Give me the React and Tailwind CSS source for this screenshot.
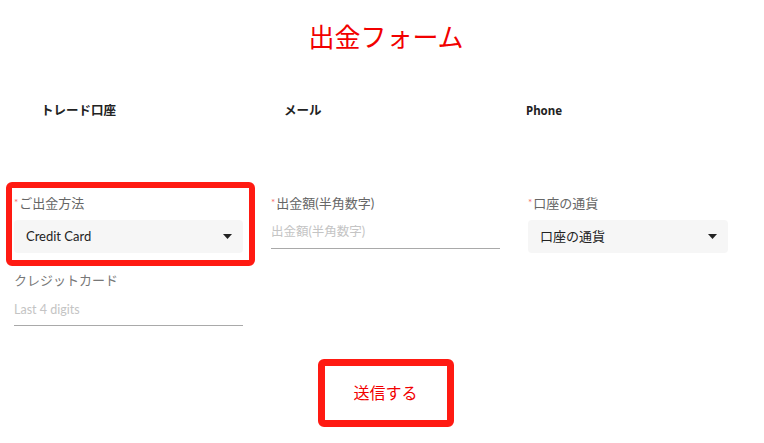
const jp = "font-['Lato','Noto_Sans_CJK_JP',sans-serif]";

function Caret() {
  return (
    <svg width="9" height="5" viewBox="0 0 9 5" className="shrink-0">
      <path d="M0 0h9L4.5 5z" fill="#222" />
    </svg>
  );
}

function Label({ children }) {
  return (
    <div className="flex items-center text-[13px] leading-[18px] text-[#666]">
      <span className="mr-[1px] mt-[-2px] text-[10px] leading-none text-[#f46a6a]">*</span>
      {children}
    </div>
  );
}

function SelectBox({ value, className = "" }) {
  return (
    <div
      className={`mt-[8px] flex h-[33px] items-center justify-between rounded-[4px] bg-[#f6f6f6] pl-[12px] pr-[11px] text-[13px] text-[#222] ${className}`}
    >
      <span>{value}</span>
      <Caret />
    </div>
  );
}

function UnderlineInput({ placeholder, className = "" }) {
  return (
    <div className={`border-b border-[#a9a9a9] ${className}`}>
      <span className="text-[12.5px] text-[#c4c4c4]">{placeholder}</span>
    </div>
  );
}

export default function App() {
  return (
    <div className={`h-[443px] w-[764px] overflow-hidden bg-white ${jp}`}>
      <h1 className="pl-[8px] pt-[18px] text-center text-[26px] leading-[36px] font-normal text-[#f20000] font-['Noto_Sans_CJK_JP',sans-serif]">
        出金フォーム
      </h1>

      <div className="mt-[48px] flex text-[12.5px] font-bold text-[#222]">
        <div className="ml-[41px] w-[243px]">トレード口座</div>
        <div className="w-[242px]">メール</div>
        <div className="font-['Noto_Sans',sans-serif] text-[11.5px]">Phone</div>
      </div>

      <div className="mt-[73px] grid grid-cols-[229px_229px_200px] gap-x-[28px] pl-[14px]">
        <div>
          <div className="relative">
            <div className="pointer-events-none absolute -left-[8px] -right-[12px] -top-[12px] -bottom-[13px] rounded-[6px] border-[6px] border-[#ff1a12]" />
            <Label>ご出金方法</Label>
            <SelectBox value="Credit Card" />
          </div>
          <div className="mt-[18px] text-[13px] text-[#777]">クレジットカード</div>
          <UnderlineInput placeholder="Last 4 digits" className="mt-[6px] pb-[5px]" />
        </div>

        <div>
          <Label>出金額(半角数字)</Label>
          <UnderlineInput placeholder="出金額(半角数字)" className="mt-[6px] pb-[6px]" />
        </div>

        <div>
          <Label>口座の通貨</Label>
          <SelectBox value="口座の通貨" />
        </div>
      </div>

      <div className="mt-[33px] flex justify-center pl-[7px]">
        <div className="flex h-[68px] w-[136px] items-center justify-center rounded-[6px] border-[7px] border-[#ff1a12] text-[16px] text-[#f20000]">
          送信する
        </div>
      </div>
    </div>
  );
}
